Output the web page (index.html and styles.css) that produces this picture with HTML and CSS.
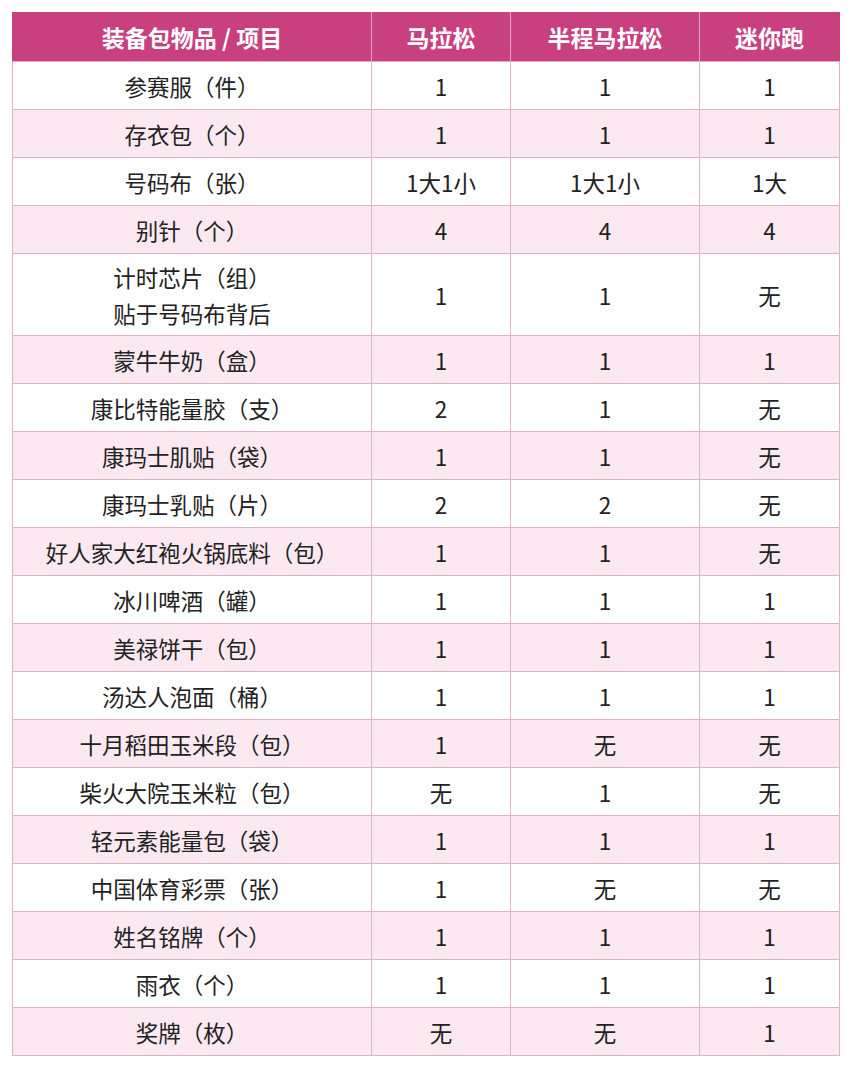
FILE: index.html
```html
<!DOCTYPE html>
<html lang="zh-CN">
<head>
<meta charset="utf-8">
<title>装备包物品</title>
<link rel="stylesheet" href="styles.css">
</head>
<body>
<table class="kit">
<colgroup>
<col class="c1"><col class="c2"><col class="c3"><col class="c4">
</colgroup>
<thead>
<tr><th>装备包物品 / 项目</th><th>马拉松</th><th>半程马拉松</th><th>迷你跑</th></tr>
</thead>
<tbody>
<tr><td>参赛服（件）</td><td>1</td><td>1</td><td>1</td></tr>
<tr><td>存衣包（个）</td><td>1</td><td>1</td><td>1</td></tr>
<tr><td>号码布（张）</td><td>1大1小</td><td>1大1小</td><td>1大</td></tr>
<tr><td>别针（个）</td><td>4</td><td>4</td><td>4</td></tr>
<tr class="tall"><td><span class="left">计时芯片（组）<br>贴于号码布背后</span></td><td>1</td><td>1</td><td>无</td></tr>
<tr><td>蒙牛牛奶（盒）</td><td>1</td><td>1</td><td>1</td></tr>
<tr><td>康比特能量胶（支）</td><td>2</td><td>1</td><td>无</td></tr>
<tr><td>康玛士肌贴（袋）</td><td>1</td><td>1</td><td>无</td></tr>
<tr><td>康玛士乳贴（片）</td><td>2</td><td>2</td><td>无</td></tr>
<tr><td>好人家大红袍火锅底料（包）</td><td>1</td><td>1</td><td>无</td></tr>
<tr><td>冰川啤酒（罐）</td><td>1</td><td>1</td><td>1</td></tr>
<tr><td>美禄饼干（包）</td><td>1</td><td>1</td><td>1</td></tr>
<tr><td>汤达人泡面（桶）</td><td>1</td><td>1</td><td>1</td></tr>
<tr><td>十月稻田玉米段（包）</td><td>1</td><td>无</td><td>无</td></tr>
<tr><td>柴火大院玉米粒（包）</td><td>无</td><td>1</td><td>无</td></tr>
<tr><td>轻元素能量包（袋）</td><td>1</td><td>1</td><td>1</td></tr>
<tr><td>中国体育彩票（张）</td><td>1</td><td>无</td><td>无</td></tr>
<tr><td>姓名铭牌（个）</td><td>1</td><td>1</td><td>1</td></tr>
<tr><td>雨衣（个）</td><td>1</td><td>1</td><td>1</td></tr>
<tr><td>奖牌（枚）</td><td>无</td><td>无</td><td>1</td></tr>
</tbody>
</table>
</body>
</html>
```
FILE: styles.css
```css
html, body {
  margin: 0;
  padding: 0;
  background: #ffffff;
}
body {
  padding: 12px 0 0 12px;
  font-family: "Noto Sans CJK SC", "Noto Sans", sans-serif;
  color: #222222;
}
.kit {
  border-collapse: collapse;
  table-layout: fixed;
  width: 827px;
  border: 1px solid #cf9bb6;
}
.c1 { width: 359px; }
.c2 { width: 139px; }
.c3 { width: 189px; }
.c4 { width: 140px; }
.kit th {
  background: #c8407d;
  color: #ffffff;
  font-weight: 700;
  font-size: 23px;
  height: 48px;
  padding: 0;
  border: 1px solid #e3a6c3;
  border-top-color: #c8407d;
  line-height: 30px;
  text-align: center;
}
.kit th:first-child { border-left-color: #c8407d; }
.kit th:last-child { border-right-color: #c8407d; }
.kit td {
  font-size: 22.5px;
  height: 47px;
  padding: 0;
  border: 1px solid #dcb3c7;
  text-align: center;
  line-height: 30px;
  vertical-align: middle;
}
.kit tbody tr:nth-child(even) td {
  background: #fbe8f1;
}
.kit tr.tall td {
  height: 81px;
}
.left {
  display: inline-block;
  text-align: left;
  line-height: 36px;
}
```
